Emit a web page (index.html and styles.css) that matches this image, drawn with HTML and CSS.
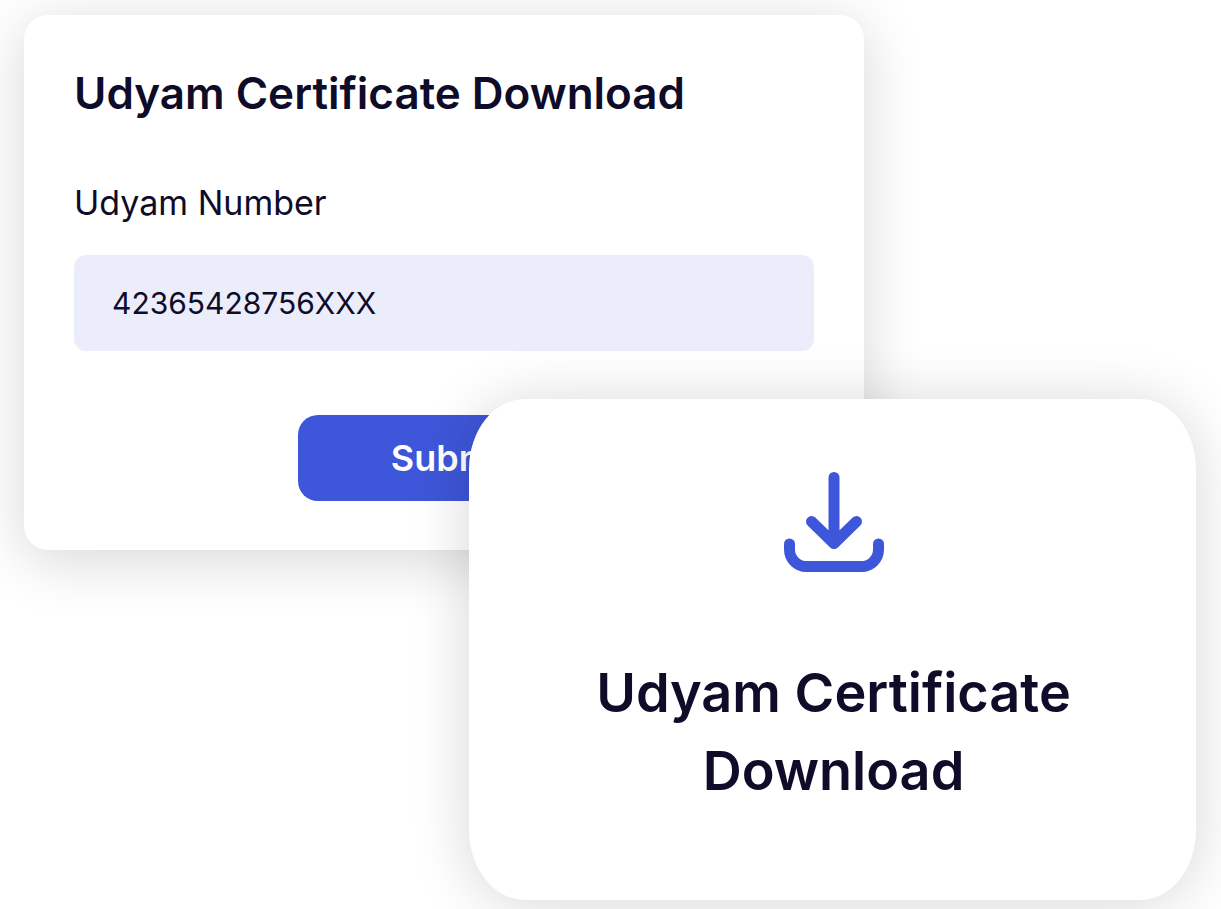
FILE: index.html
```html
<!DOCTYPE html>
<html lang="en">
<head>
    <meta charset="UTF-8">
    <meta name="viewport" content="width=device-width, initial-scale=1.0">
    <title>Udyam Certificate Download</title>
    <link rel="stylesheet" href="styles.css">
</head>
<body>
    <main class="stage">
        <form class="card form-card">
            <h1 class="form-title">Udyam Certificate Download</h1>
            <label class="form-label" for="udyamNumber">Udyam Number</label>
            <input class="form-input" type="text" id="udyamNumber" value="42365428756XXX">
            <button class="button" type="button">Submit</button>
        </form>

        <section class="card download-card">
            <svg class="download-icon" viewBox="0 0 100 100" aria-hidden="true">
                <path d="M50 5.500V70M27.500 49.500L50 71.500L72.500 49.500M5.500 72V77.500A17 17 0 0 0 22.500 94.500H77.500A17 17 0 0 0 94.500 77.500V72"/>
            </svg>
            <h2 class="download-title">Udyam Certificate Download</h2>
        </section>
    </main>
</body>
</html>
```
FILE: styles.css
```css
* {
    box-sizing: border-box;
}

body {
    margin: 0;
    background: #fff;
    color: #0e0c28;
    font-family: 'Inter', 'Liberation Sans', sans-serif;
    overflow: hidden;
}

/* the two cards share the middle column, so they overlap */
.stage {
    display: grid;
    grid-template-columns: 445fr 395fr 332fr;
    padding: 15px 25px 9px 24px;
}

.card {
    background: #fff;
}

.form-card {
    grid-column: 1 / 3;
    display: flex;
    flex-direction: column;
    padding: 50px 50px 49px;
    border-radius: 24px;
    box-shadow: 0 10px 60px rgba(0, 0, 0, 0.16);
}

.form-title {
    margin: 0 0 58px;
    font-size: 44px;
    font-weight: 600;
    line-height: 56px;
}

.form-label {
    margin-bottom: 28px;
    font-size: 34px;
    line-height: 48px;
}

.form-input {
    width: 100%;
    height: 96px;
    padding: 0 38px;
    border: none;
    border-radius: 12px;
    background: #ebedfa;
    color: inherit;
    font-family: inherit;
    font-size: 30px;
}

.button {
    align-self: flex-start;
    width: 308px;
    height: 86px;
    margin: 64px 0 0 224px;
    border: none;
    border-radius: 20px;
    background: #3e56d9;
    color: #fff;
    font-family: inherit;
    font-size: 36px;
    font-weight: 600;
}

.download-card {
    grid-column: 2 / 4;
    display: flex;
    flex-direction: column;
    align-items: center;
    margin-top: -151px;
    padding: 73px 98px 90px 100px;
    border-radius: 56px / 70px;
    box-shadow: 0 4px 60px rgba(0, 0, 0, 0.16);
}

.download-icon {
    width: 100px;
    height: 100px;
    fill: none;
    stroke: #3e56d9;
    stroke-width: 11;
    stroke-linecap: round;
    stroke-linejoin: round;
}

.download-title {
    margin: 82px 0 0;
    font-size: 54px;
    font-weight: 600;
    line-height: 78px;
    text-align: center;
}
```
